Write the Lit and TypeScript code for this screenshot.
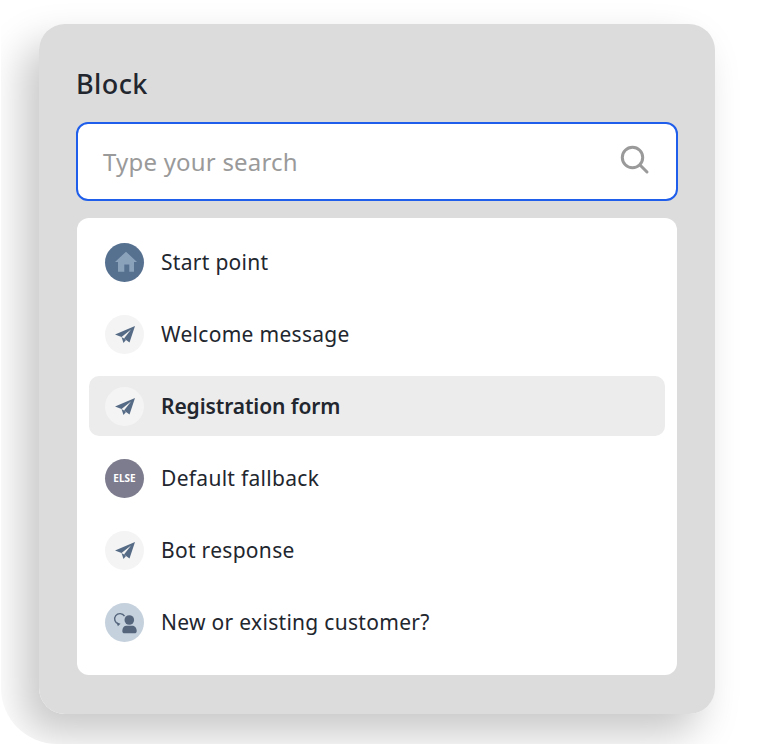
import { LitElement, html, css, svg } from 'lit'
import { customElement } from 'lit/decorators.js'

const ICONS = {
  home: svg`<path d="M21 8.700 32 19h-3v9.700h-4.700v-7.200h-5v7.200H13V19h-3z" fill="#8ba2bb"/>`,
  plane: svg`
    <path d="M30 11 10 19.500l6.500 2.500 9.500-7.500-7 9 5.500 4z" fill="#566b85"/>
    <path d="M16.500 22l2 6 2.500-3-2-1.500z" fill="#566b85"/>`,
  customer: svg`
    <path d="M19.500 13.200A5.300 5.300 0 1 0 13.500 21" fill="none" stroke="#54657c" stroke-width="1.400"/>
    <path d="M11.500 19.200l4 1.500-2.600 2.600z" fill="#54657c"/>
    <circle cx="24.300" cy="17" r="4.800" fill="#54657c"/>
    <path d="M17.300 28c0-3.600 2-5.300 4-5.300h6c2 0 4.400 1.700 4.400 5.300 0 1.400-.8 2.300-2.200 2.300h-10c-1.400 0-2.200-.9-2.200-2.300z" fill="#54657c"/>`,
}

type Row = { label: string; icon: keyof typeof ICONS | 'else'; tone: string; active?: boolean }

const ROWS: Row[] = [
  { label: 'Start point', icon: 'home', tone: 'home' },
  { label: 'Welcome message', icon: 'plane', tone: 'plain' },
  { label: 'Registration form', icon: 'plane', tone: 'plain', active: true },
  { label: 'Default fallback', icon: 'else', tone: 'fallback' },
  { label: 'Bot response', icon: 'plane', tone: 'plain' },
  { label: 'New or existing customer?', icon: 'customer', tone: 'customer' },
]

@customElement('app-root')
export class AppRoot extends LitElement {
  static styles = css`
    :host {
      display: block;
      width: 757px;
      height: 744px;
      overflow: hidden;
      background: #fff;
      font-family: 'Noto Sans', 'Open Sans', sans-serif;
      color: #22262e;
    }

    .page {
      position: relative;
      padding: 24px 42px 0 39px;
    }

    /* soft shadow, cut off by a big rounded shape like in the original artwork */
    .shadow-clip {
      position: absolute;
      left: 1px;
      top: 0;
      width: 790px;
      height: 744px;
      overflow: hidden;
      border-radius: 0 0 0 56px;
    }

    .shadow-shape {
      position: absolute;
      left: 38px;
      top: 24px;
      width: 676px;
      height: 690px;
      border-radius: 26px;
      box-shadow: -16px 20px 40px rgba(0, 0, 0, 0.22);
    }

    .card {
      position: relative;
      box-sizing: border-box;
      height: 690px;
      padding: 42px 37px 38px;
      background: #dcdcdc;
      border-radius: 26px;
    }

    h1 {
      margin: 0 0 20px;
      height: 36px;
      font-size: 27px;
      line-height: 36px;
      font-weight: 500;
      letter-spacing: 0.4px;
    }

    .search {
      box-sizing: border-box;
      display: flex;
      align-items: center;
      justify-content: space-between;
      height: 79px;
      padding: 0 25px;
      background: #fff;
      border: 2px solid #1f5eea;
      border-radius: 12px;
      font-size: 24px;
      letter-spacing: 0.2px;
      color: #9a9a9a;
    }

    .search svg {
      display: block;
      margin-top: -3px;
    }

    .list {
      box-sizing: border-box;
      height: 457px;
      margin: 17px 1px 0;
      padding: 14px 12px 12px;
      display: flex;
      flex-direction: column;
      gap: 12px;
      background: #fff;
      border-radius: 12px;
    }

    .row {
      display: flex;
      align-items: center;
      gap: 17px;
      height: 60px;
      padding: 0 16px;
      border-radius: 10px;
      font-size: 21px;
      letter-spacing: 0.3px;
    }

    .row span:last-child {
      margin-top: -1px;
    }

    .row.active {
      background: #ececec;
      font-weight: 600;
      letter-spacing: -0.1px;
    }

    .badge {
      flex: none;
      display: flex;
      align-items: center;
      justify-content: center;
      width: 39px;
      height: 39px;
      border-radius: 50%;
      background: #f4f4f4;
    }

    .badge.home {
      background: #567090;
    }

    .badge.fallback {
      background: #7c7c8e;
      color: #fff;
      font-size: 10px;
      font-weight: 700;
      letter-spacing: 0;
    }

    .badge.customer {
      background: #c5d1dd;
    }

    .badge svg {
      display: block;
    }
  `

  renderBadge(row: Row) {
    if (row.icon === 'else') {
      return html`<span class="badge fallback">ELSE</span>`
    }
    return html`<span class="badge ${row.tone}">
      <svg width="39" height="39" viewBox="0 0 39 39">${ICONS[row.icon]}</svg>
    </span>`
  }

  render() {
    return html`
      <div class="page">
        <div class="shadow-clip"><div class="shadow-shape"></div></div>
        <section class="card">
          <h1>Block</h1>
          <div class="search">
            <span>Type your search</span>
            <svg width="32" height="32" viewBox="0 0 32 32" fill="none" stroke="#9a9a9a" stroke-width="3">
              <circle cx="13.500" cy="13.500" r="10.200" />
              <path d="M21 21l7 7" stroke-linecap="round" />
            </svg>
          </div>
          <div class="list">
            ${ROWS.map(
              (row) => html`
                <div class="row ${row.active ? 'active' : ''}">
                  ${this.renderBadge(row)}
                  <span>${row.label}</span>
                </div>
              `
            )}
          </div>
        </section>
      </div>
    `
  }
}
